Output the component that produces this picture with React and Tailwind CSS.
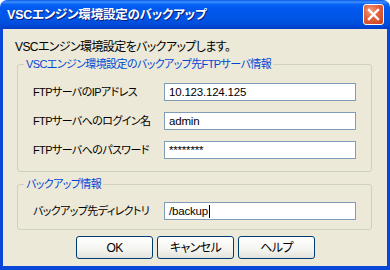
import React from "react";

const font = "font-['Liberation_Sans','Noto_Sans_CJK_JP',sans-serif] [font-feature-settings:'palt']";

function Field({ label, value, caret }) {
  return (
    <div className="flex items-center">
      <div className="flex-1 min-w-0 whitespace-nowrap text-[11px] leading-[14px] tracking-[-0.6px] text-black">{label}</div>
      <div className="w-[192px] h-[18px] shrink-0 border border-[#7F9DB9] bg-white flex items-center pl-[4px] text-[11.5px] leading-[14px] tracking-[-0.2px] text-black">
        <span>{value}</span>
        {caret && <span className="w-px h-[13px] bg-black ml-px" />}
      </div>
    </div>
  );
}

function Btn({ children }) {
  return (
    <button className="w-[77px] h-[23px] rounded-[3px] border border-[#003C74] bg-[linear-gradient(to_bottom,#FFFFFF_0%,#F4F4F0_60%,#E3E2DA_100%)] text-[12px] leading-[14px] tracking-[-0.6px] text-black">
      {children}
    </button>
  );
}

export default function App() {
  return (
    <div className={`w-[390px] h-[270px] flex flex-col ${font}`}>
      <div className="h-[29px] shrink-0 rounded-t-[7px] bg-[linear-gradient(to_bottom,#0A5AE8_0%,#3D8FFE_7%,#0764F4_15%,#0058EE_30%,#0055E5_65%,#0149D8_88%,#003DC4_100%)] flex items-center justify-between pl-[7px] pr-[6px]">
        <span className="text-white font-bold text-[12.5px] leading-[16px] tracking-[-0.2px] [text-shadow:1px_1px_0_#0A1C7E]">
          VSCエンジン環境設定のバックアップ
        </span>
        <div className="w-[21px] h-[21px] rounded-[3px] border border-white bg-[radial-gradient(circle_at_35%_30%,#F29B7C_0%,#E2603B_45%,#C8401D_100%)] flex items-center justify-center">
          <svg width="13" height="13" viewBox="0 0 13 13">
            <path d="M2 2 L11 11 M11 2 L2 11" stroke="white" strokeWidth="2.4" strokeLinecap="square" />
          </svg>
        </div>
      </div>

      <div className="flex-1 bg-[#ECE9D8] border-x-[3px] border-b-[4px] border-[#0847D9] flex flex-col">
        <div className="pt-[10px] pl-[12px] text-[12px] leading-[16px] tracking-[-0.6px] text-black">
          VSCエンジン環境設定をバックアップします。
        </div>

        <fieldset className="mt-[2px] ml-[14px] mr-[15px] border border-[#D0D0BF] rounded-[3px] pl-[15px] pr-[15px] pt-[12px] pb-[12px] flex flex-col gap-[11px]">
          <legend className="ml-[-9px] px-[2px] text-[11px] leading-[14px] tracking-[-0.6px] text-[#0046D5]">
            VSCエンジン環境設定のバックアップ先FTPサーバ情報
          </legend>
          <Field label="FTPサーバのIPアドレス" value="10.123.124.125" />
          <Field label="FTPサーバへのログイン名" value="admin" />
          <Field label="FTPサーバへのパスワード" value="********" />
        </fieldset>

        <fieldset className="mt-[5px] ml-[14px] mr-[15px] border border-[#D0D0BF] rounded-[3px] pl-[15px] pr-[15px] pt-[11px] pb-[9px] flex flex-col">
          <legend className="ml-[-9px] px-[2px] text-[11px] leading-[14px] tracking-[-0.6px] text-[#0046D5]">
            バックアップ情報
          </legend>
          <Field label="バックアップ先ディレクトリ" value="/backup" caret />
        </fieldset>

        <div className="mt-[6px] flex justify-center gap-[4px] pl-px">
          <Btn>OK</Btn>
          <Btn>キャンセル</Btn>
          <Btn>ヘルプ</Btn>
        </div>
      </div>
    </div>
  );
}
